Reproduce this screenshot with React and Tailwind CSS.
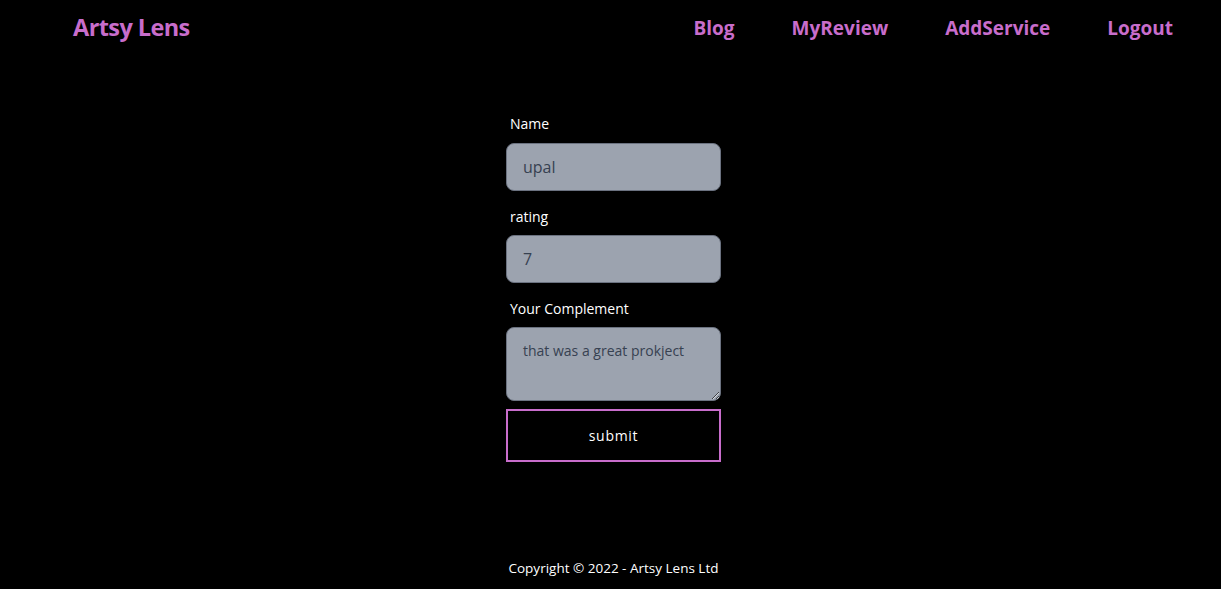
// App.jsx
import React from 'react';

// ! Navbar
const Navbar = () => {
  return (
    <nav className="h-14 flex items-center justify-between pl-[73px] pr-[48px]">
      <a href="#" className="text-[23.5px] font-bold text-[#c86dcb] tracking-tight">
        Artsy Lens
      </a>
      <ul className="flex items-center gap-[57px] text-[19px] font-bold text-[#c86dcb]">
        <li>Blog</li>
        <li>MyReview</li>
        <li>AddService</li>
        <li>Logout</li>
      </ul>
    </nav>
  );
};

// ! Review form
const ReviewForm = () => {
  return (
    <div className="flex justify-center pl-[6px]">
      <form className="w-[215px] mt-[58px] flex flex-col">
        <label className="pl-1 text-[14px] text-white h-[19px] leading-[19px] mb-[10px]">Name</label>
        <input
          defaultValue="upal"
          className="h-12 w-full rounded-lg bg-[#9ca3af] border border-[#6b7280] px-4 text-[16px] text-[#374151] outline-none"
        />
        <label className="pl-1 text-[14px] text-white h-[19px] leading-[19px] mt-[16px] mb-[9px]">rating</label>
        <input
          defaultValue="7"
          className="h-12 w-full rounded-lg bg-[#9ca3af] border border-[#6b7280] px-4 text-[16px] text-[#374151] outline-none"
        />
        <label className="pl-1 text-[14px] text-white h-[19px] leading-[19px] mt-[16px] mb-[9px]">Your Complement</label>
        <textarea
          defaultValue="that was a great prokject"
          className="h-[74px] w-full rounded-lg bg-[#9ca3af] border border-[#6b7280] px-4 pt-[12px] text-[14px] text-[#374151] outline-none"
        />
        <button
          type="button"
          className="mt-2 h-[53px] w-full border-2 border-[#c86dcb] text-white text-[14px] tracking-wider"
        >
          submit
        </button>
      </form>
    </div>
  );
};

export default function App() {
  return (
    <div
      className="min-h-[589px] bg-black flex flex-col"
      style={{ fontFamily: '"Open Sans", "Noto Sans", sans-serif' }}
    >
      <Navbar />
      <ReviewForm />
      <footer className="mt-auto pb-[11px] pl-[6px] text-center text-[13.5px] text-white">
        Copyright © 2022 - Artsy Lens Ltd
      </footer>
    </div>
  );
}
